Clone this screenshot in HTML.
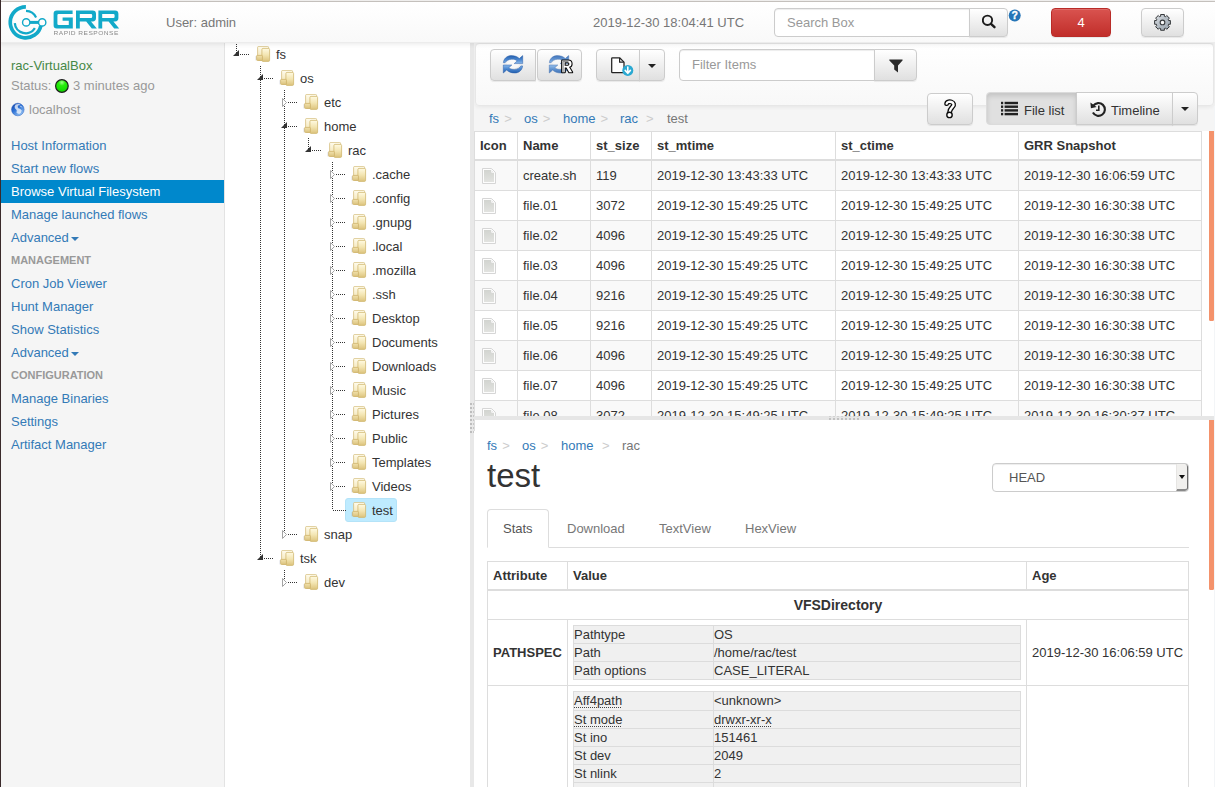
<!DOCTYPE html>
<html>
<head>
<meta charset="utf-8">
<title>GRR Rapid Response</title>
<style>
*{box-sizing:border-box;}
html,body{margin:0;padding:0;}
html{width:1215px;height:787px;overflow:hidden;}
body{width:1215px;height:787px;overflow:hidden;position:relative;background:#fff;
  font-family:"Liberation Sans",sans-serif;font-size:13px;color:#333;line-height:18px;}
.abs{position:absolute;}
a{color:#337ab7;text-decoration:none;}

/* window edges */
#edgeTop0{left:0;top:0;width:1215px;height:1px;background:#f2f1f0;}
#edgeTop1{left:0;top:1px;width:1215px;height:1px;background:#c9c5c1;}
#edgeLeft{left:0;top:0;width:1px;height:787px;background:#3a2a2b;z-index:50;}

/* header */
#header{left:0;top:2px;width:1215px;height:41px;background:linear-gradient(#ffffff,#f9f9f9);
  border-bottom:1px solid #ececec;box-shadow:0 1px 5px rgba(0,0,0,.09);z-index:10;}
.htext{color:#777;font-size:13px;line-height:18px;white-space:nowrap;}

.btn{position:absolute;border:1px solid #ccc;border-radius:4px;
  background:linear-gradient(#ffffff,#e0e0e0);box-shadow:inset 0 1px 0 rgba(255,255,255,.15),0 1px 1px rgba(0,0,0,.075);}
.inp{position:absolute;border:1px solid #ccc;background:#fff;border-radius:4px;
  box-shadow:inset 0 1px 1px rgba(0,0,0,.075);color:#999;font-size:13px;line-height:27px;padding-left:12px;}

/* sidebar */
#sidebar{left:1px;top:43px;width:224px;height:744px;background:#f5f5f5;border-right:1px solid #e3e3e3;}
.nav{position:absolute;left:0;width:223px;height:23px;line-height:23px;padding-left:10px;color:#337ab7;white-space:nowrap;}
.nav.active{background:#0088cc;color:#fff;}
.navh{position:absolute;left:0;width:223px;height:23px;line-height:23px;padding-left:10px;color:#999;font-weight:bold;font-size:11px;white-space:nowrap;}
.caret{display:inline-block;width:0;height:0;border-top:4px solid currentColor;border-left:4px solid transparent;border-right:4px solid transparent;vertical-align:middle;margin-left:2px;}

/* tree */
#tree{left:225px;top:43px;width:245px;height:744px;background:#fff;}
.treelines{position:absolute;left:0;top:0;z-index:2;}
.fold{position:absolute;z-index:3;}
.tl{position:absolute;height:24px;line-height:26px;font-size:13px;color:#333;white-space:nowrap;z-index:3;}
.tsel{position:absolute;width:52px;height:24px;background:#beebff;border:1px solid #b4e3f8;border-radius:3px;z-index:1;}

/* splitters */
#vsplit{left:470px;top:43px;width:4px;height:744px;background:#e8e8e8;z-index:7;}
#hsplit{left:474px;top:416px;width:741px;height:4px;background:#e6e6e6;z-index:6;}

/* right top */
#rtop{left:474px;top:43px;width:741px;height:373px;background:#fff;overflow:hidden;}
#bcbar{left:474px;top:43px;width:741px;height:88px;background:#f5f5f5;}
#toolbar{left:475px;top:43px;width:739px;height:63px;background:linear-gradient(#ffffff,#f8f8f8);border:1px solid #e7e7e7;border-radius:4px;
  box-shadow:0 1px 4px rgba(0,0,0,.065);}
.bc{position:absolute;white-space:nowrap;font-size:13px;line-height:18px;}
.bc .sep{color:#ccc;margin-left:1.4px;}
.bc .act{color:#777;}

table.ft{position:absolute;left:474px;top:131px;border-collapse:collapse;background:#fff;table-layout:fixed;width:727px;}
table.ft th,table.ft td{border:1px solid #ddd;padding:0 5px;text-align:left;font-size:13px;white-space:nowrap;overflow:hidden;}
table.ft th{height:28px;padding-top:2px;font-weight:bold;border-bottom:2px solid #ddd;line-height:18px;}
table.ft td{height:30px;line-height:18px;}
table.ft tr.odd td{background:#f9f9f9;}
table.ft tr#r1 td{height:31px;padding-top:1px;}
.fi{display:block;margin-left:2px;}

#scroll1{left:1209px;top:131px;width:5px;height:190px;background:#f4926b;z-index:7;border-radius:0 0 1.5px 1.5px;}
#redge{left:1214px;top:106px;width:1px;height:681px;background:#f3f5f7;z-index:9;}
#scroll2{left:1209px;top:420px;width:5px;height:170px;background:#f4926b;z-index:7;border-radius:0 0 1.5px 1.5px;}

/* bottom */
#rbot{left:475px;top:420px;width:740px;height:367px;background:#fff;overflow:hidden;}
h2.title{position:absolute;left:487px;top:456px;margin:0;font-size:33px;line-height:40px;font-weight:normal;color:#333;}
.tab{position:absolute;top:509px;height:39px;line-height:18px;padding:11px 15px 9px;color:#777;white-space:nowrap;}
.tab.active{border:1px solid #ddd;border-bottom-color:#fff;border-radius:4px 4px 0 0;color:#555;background:#fff;padding:10px 15px 9px;}
#tabline{left:488px;top:547px;width:701px;height:1px;background:#ddd;}

#stclip{left:487px;top:561px;width:720px;height:226px;overflow:hidden;}
table.st{position:absolute;left:0;top:0;border-collapse:collapse;width:701px;table-layout:fixed;background:#fff;}
table.st>tbody>tr>th,table.st>tbody>tr>td{border:1px solid #ddd;padding:5px;text-align:left;vertical-align:middle;font-size:13px;line-height:18px;white-space:nowrap;}
table.st>tbody>tr>th{border-bottom:2px solid #ddd;height:28px;padding:1px 5px 0;}
table.in{border-collapse:collapse;width:100%;table-layout:fixed;background:#f0f0f0;}
table.in td{border:1px solid #dcdcdc;padding:1px 1px 1px 0;line-height:15px;height:18px;font-size:13px;white-space:nowrap;}
abbr{text-decoration:underline dotted #444;text-decoration-thickness:1px;text-underline-offset:2px;}
</style>
</head>
<body>
<svg width="0" height="0" style="position:absolute">
<defs>
  <linearGradient id="fg1" x1="0" y1="0" x2="0" y2="1"><stop offset="0" stop-color="#fffcee"/><stop offset="0.6" stop-color="#f6ebc4"/><stop offset="1" stop-color="#e8d69e"/></linearGradient>
  <linearGradient id="fg2" x1="0" y1="0" x2="0" y2="1"><stop offset="0" stop-color="#fffae2"/><stop offset="0.5" stop-color="#f3e5b2"/><stop offset="1" stop-color="#dcc37c"/></linearGradient>
  <linearGradient id="fg3" x1="0" y1="0" x2="0" y2="1"><stop offset="0" stop-color="#f1e1ac"/><stop offset="1" stop-color="#dcc480"/></linearGradient>
  <g id="folder">
    <rect x="2.6" y="0.4" width="11" height="13.8" rx="1.1" fill="url(#fg1)" stroke="#d3bb78" stroke-width="0.75"/>
    <rect x="6.9" y="2.4" width="7.7" height="13" rx="1.1" fill="url(#fg2)" stroke="#cfb56c" stroke-width="0.75"/>
    <rect x="1.6" y="9.4" width="5.8" height="5" rx="0.7" fill="url(#fg3)" stroke="#cdb268" stroke-width="0.75"/>
    <rect x="0.4" y="10.2" width="0.8" height="4.2" fill="#9aa3b5" opacity="0.3"/>
  </g>
  <linearGradient id="rg1" x1="0" y1="0" x2="0" y2="1"><stop offset="0" stop-color="#235fae"/><stop offset="0.5" stop-color="#4a86cf"/><stop offset="1" stop-color="#8ab8ea"/></linearGradient>
  <linearGradient id="rg2" x1="0" y1="1" x2="0" y2="0"><stop offset="0" stop-color="#235fae"/><stop offset="0.5" stop-color="#4a86cf"/><stop offset="1" stop-color="#8ab8ea"/></linearGradient>
  <g id="refresh">
    <ellipse cx="0" cy="0" rx="6.2" ry="4.2" fill="#ffffff" opacity="0.6"/>
    <path id="rarrow" d="M-9.6 -1.6 C-9.4 -5.5 -6 -8.7 -2 -8.7 C1.5 -8.7 4.5 -7.7 6.3 -5.7 L9.7 -8.7 L9.7 -0.7 L1.2 -0.7 L4.2 -3.4 C3 -4.6 1 -5.3 -1.5 -5.1 C-4.5 -4.9 -7 -3.5 -7.9 -1.6 Z" fill="url(#rg1)" stroke="#2a5fa8" stroke-width="0.5"/>
    <path d="M9.6 1.6 C9.4 5.5 6 8.7 2 8.7 C-1.5 8.7 -4.5 7.7 -6.3 5.7 L-9.7 8.7 L-9.7 0.7 L-1.2 0.7 L-4.2 3.4 C-3 4.6 -1 5.3 1.5 5.1 C4.5 4.9 7 3.5 7.9 1.6 Z" fill="url(#rg2)" stroke="#2a5fa8" stroke-width="0.5"/>
  </g>
  <linearGradient id="fig" x1="0" y1="0" x2="0" y2="1"><stop offset="0" stop-color="#d2d4d0"/><stop offset="1" stop-color="#e2e3e0"/></linearGradient>
  <g id="fileicon">
    <path d="M0.5 0.5 L9.5 0.5 L13.5 4.5 L13.5 15.5 L0.5 15.5 Z" fill="#fdfdfd" stroke="#d6d6d6" stroke-width="1"/>
    <path d="M2 2 L9 2 L12 5 L12 14 L2 14 Z" fill="url(#fig)"/>
    <path d="M9.4 1.2 L9.6 4.4 L12.8 4.6" fill="none" stroke="#f4f4f4" stroke-width="1"/>
  </g>
</defs>
</svg>

<div class="abs" id="edgeTop0"></div><div class="abs" id="edgeTop1"></div>

<!-- HEADER -->
<div class="abs" id="header"></div>
<svg class="abs" id="logo" style="left:6px;top:3px;z-index:11;opacity:0.999;will-change:opacity" width="120" height="40" viewBox="0 0 120 40">
  <g fill="none" stroke="#12a9c9" stroke-linecap="butt">
    <path d="M19.9 3.9 A15.5 15.5 0 1 0 34.9 22.6" stroke-width="3.7"/>
    <path d="M20 7.9 A11.5 11.5 0 0 1 30.1 14.5" stroke-width="2.1"/>
    <path d="M8.8 20.1 A10.9 10.9 0 0 0 28.9 25.2" stroke-width="2.3"/>
    <path d="M23.5 19.4 L33 19.4" stroke-width="3"/>
    <circle cx="20.2" cy="19.4" r="3.65" stroke-width="1.4" fill="#fdfdfd"/>
    <circle cx="36.2" cy="19.4" r="3.65" stroke-width="1.4" fill="#fdfdfd"/>
  </g>
  <g fill="#12a9c9">
    <path d="M47.6 10.6 Q47.6 7.4 50.8 7.4 L66.6 7.4 L66.6 11 L52.6 11 Q51.4 11 51.4 12.2 L51.4 20.8 Q51.4 22 52.6 22 L62.8 22 L62.8 17.8 L56.6 17.8 L56.6 14.6 L66.8 14.6 L66.8 25.4 L50.8 25.4 Q47.6 25.4 47.6 22.2 Z"/>
    <path id="Rg" d="M70 7.4 L86.6 7.4 Q90 7.4 90 10.8 L90 15 Q90 18.4 86.6 18.4 L85 18.4 L90.8 25.4 L85.8 25.4 L80.2 18.4 L73.8 18.4 L73.8 25.4 L70 25.4 Z M73.8 11 L73.8 15 L85 15 Q86.2 15 86.2 13.8 L86.2 12.2 Q86.2 11 85 11 Z" fill-rule="evenodd"/>
    <use href="#Rg" x="22.4"/>
  </g>
  <text x="47.6" y="32" font-family="Liberation Sans, sans-serif" font-size="5.1" fill="#8a8a8a" textLength="65.2" lengthAdjust="spacingAndGlyphs" style="letter-spacing:0.35px">RAPID RESPONSE</text>
</svg>
<div class="abs htext" style="left:166px;top:14px;z-index:11">User: admin</div>
<div class="abs htext" style="left:593px;top:14px;z-index:11">2019-12-30 18:04:41 UTC</div>
<div class="inp" style="left:774px;top:8px;width:196px;height:29px;border-radius:4px 0 0 4px;z-index:11">Search Box</div>
<div class="btn" style="left:969px;top:8px;width:39px;height:29px;border-radius:0 4px 4px 0;z-index:11">
  <svg style="position:absolute;left:12px;top:5px" width="15" height="16" viewBox="0 0 15 16"><circle cx="5.5" cy="6.3" r="4.65" fill="none" stroke="#1c1c1c" stroke-width="1.9"/><path d="M9 9.8 L12.5 13.2" stroke="#1c1c1c" stroke-width="2.4" stroke-linecap="round"/></svg>
</div>
<svg class="abs" style="left:1008px;top:9px;z-index:11;opacity:0.999" width="14" height="14" viewBox="0 0 14 14"><circle cx="6.7" cy="6.5" r="6" fill="#2575b7"/><text x="6.7" y="10.2" text-anchor="middle" font-family="Liberation Sans, sans-serif" font-weight="bold" font-size="10.5" fill="#fff" stroke="#fff" stroke-width="0.35">?</text></svg>
<div class="btn" style="left:1051px;top:8px;width:60px;height:29px;background:linear-gradient(#d9534f,#c12e2a);border-color:#b92c28;color:#fff;text-align:center;line-height:27px;z-index:11">4</div>
<div class="btn" style="left:1141px;top:8px;width:43px;height:29px;z-index:11">
  <svg style="position:absolute;left:10px;top:3px" width="20" height="20" viewBox="-10.5 -10.4 20 20">
    <defs><linearGradient id="gearg" x1="0" y1="0" x2="1" y2="1"><stop offset="0" stop-color="#dfe3e7"/><stop offset="0.5" stop-color="#b4bcc4"/><stop offset="1" stop-color="#9aa5b0"/></linearGradient></defs>
    <path d="M-1.82 -6.14 L-1.89 -7.88 L1.89 -7.88 L1.82 -6.14 L3.05 -5.62 L4.23 -6.91 L6.91 -4.23 L5.62 -3.05 L6.14 -1.82 L7.88 -1.89 L7.88 1.89 L6.14 1.82 L5.62 3.05 L6.91 4.23 L4.23 6.91 L3.05 5.62 L1.82 6.14 L1.89 7.88 L-1.89 7.88 L-1.82 6.14 L-3.05 5.62 L-4.23 6.91 L-6.91 4.23 L-5.62 3.05 L-6.14 1.82 L-7.88 1.89 L-7.88 -1.89 L-6.14 -1.82 L-5.62 -3.05 L-6.91 -4.23 L-4.23 -6.91 L-3.05 -5.62 Z" fill="url(#gearg)" stroke="#34373a" stroke-width="1" stroke-linejoin="round"/>
    <circle r="2.3" fill="#fbfbfb" stroke="#34373a" stroke-width="1.1"/>
  </svg>
</div>

<!-- SIDEBAR -->
<div class="abs" id="sidebar">
  <div class="abs" style="left:10px;top:14px;color:#468847;white-space:nowrap">rac-VirtualBox</div>
  <div class="abs" style="left:10px;top:34px;color:#999;white-space:nowrap">Status:</div>
  <svg class="abs" style="left:53px;top:35px" width="16" height="16" viewBox="0 0 16 16">
    <defs><radialGradient id="gg" cx="0.5" cy="0.22" r="0.75"><stop offset="0" stop-color="#9dff8a"/><stop offset="0.35" stop-color="#27ef0c"/><stop offset="1" stop-color="#0fd400"/></radialGradient></defs>
    <circle cx="7.9" cy="8" r="6.3" fill="url(#gg)" stroke="#1d1d1d" stroke-width="1.2"/>
  </svg>
  <div class="abs" style="left:72px;top:34px;color:#999;white-space:nowrap">3 minutes ago</div>
  <svg class="abs" style="left:10px;top:59px" width="15" height="15" viewBox="0 0 15 15">
    <defs><linearGradient id="gl" x1="0.1" y1="0" x2="0.8" y2="1"><stop offset="0" stop-color="#0f3fa6"/><stop offset="0.45" stop-color="#2f73d6"/><stop offset="1" stop-color="#9fcbf6"/></linearGradient></defs>
    <circle cx="6.8" cy="7.5" r="6.3" fill="url(#gl)" stroke="#2a60c0" stroke-width="0.5"/>
    <path d="M4.6 2.6 Q7 1.3 9.6 2.4 Q8 3.4 7 3.6 Q6.2 5.2 7.4 6.2 Q9.6 6.6 10.8 8.4 Q10.4 10.8 8.2 12 Q6.4 12 5.4 10.6 Q6.4 8.8 5.2 7.6 Q3.4 6.8 3.6 4.6 Z" fill="#ffffff" opacity="0.72"/>
    <path d="M8.6 3.6 Q10.6 3.8 11.6 5.4 Q10.4 5.6 9.4 5 Z" fill="#ffffff" opacity="0.55"/>
  </svg>
  <div class="abs" style="left:28px;top:58px;color:#999;white-space:nowrap">localhost</div>

  <div class="nav" style="top:91px">Host Information</div>
  <div class="nav" style="top:114px">Start new flows</div>
  <div class="nav active" style="top:137px">Browse Virtual Filesystem</div>
  <div class="nav" style="top:160px">Manage launched flows</div>
  <div class="nav" style="top:183px">Advanced<span class="caret"></span></div>
  <div class="navh" style="top:206px">MANAGEMENT</div>
  <div class="nav" style="top:229px">Cron Job Viewer</div>
  <div class="nav" style="top:252px">Hunt Manager</div>
  <div class="nav" style="top:275px">Show Statistics</div>
  <div class="nav" style="top:298px">Advanced<span class="caret"></span></div>
  <div class="navh" style="top:321px">CONFIGURATION</div>
  <div class="nav" style="top:344px">Manage Binaries</div>
  <div class="nav" style="top:367px">Settings</div>
  <div class="nav" style="top:390px">Artifact Manager</div>
</div>
<div class="abs" id="edgeLeft"></div>

<!-- TREE -->
<div class="abs" id="tree"></div>
<svg class="treelines" width="1215" height="787" viewBox="0 0 1215 787"><g stroke="#333" stroke-width="1" stroke-dasharray="1 1" shape-rendering="crispEdges" fill="none"><line x1="236.5" y1="44" x2="236.5" y2="54"/><line x1="260.5" y1="66" x2="260.5" y2="558"/><line x1="284.5" y1="90" x2="284.5" y2="534"/><line x1="308.5" y1="138" x2="308.5" y2="150"/><line x1="332.5" y1="162" x2="332.5" y2="510"/><line x1="284.5" y1="570" x2="284.5" y2="582"/><line x1="240" y1="54.5" x2="249" y2="54.5"/><line x1="264" y1="78.5" x2="273" y2="78.5"/><line x1="288" y1="102.5" x2="297" y2="102.5"/><line x1="288" y1="126.5" x2="297" y2="126.5"/><line x1="312" y1="150.5" x2="321" y2="150.5"/><line x1="336" y1="174.5" x2="345" y2="174.5"/><line x1="336" y1="198.5" x2="345" y2="198.5"/><line x1="336" y1="222.5" x2="345" y2="222.5"/><line x1="336" y1="246.5" x2="345" y2="246.5"/><line x1="336" y1="270.5" x2="345" y2="270.5"/><line x1="336" y1="294.5" x2="345" y2="294.5"/><line x1="336" y1="318.5" x2="345" y2="318.5"/><line x1="336" y1="342.5" x2="345" y2="342.5"/><line x1="336" y1="366.5" x2="345" y2="366.5"/><line x1="336" y1="390.5" x2="345" y2="390.5"/><line x1="336" y1="414.5" x2="345" y2="414.5"/><line x1="336" y1="438.5" x2="345" y2="438.5"/><line x1="336" y1="462.5" x2="345" y2="462.5"/><line x1="336" y1="486.5" x2="345" y2="486.5"/><line x1="333" y1="510.5" x2="346" y2="510.5"/><line x1="288" y1="534.5" x2="297" y2="534.5"/><line x1="264" y1="558.5" x2="273" y2="558.5"/><line x1="288" y1="582.5" x2="297" y2="582.5"/></g><path d="M239 50 L239 56 L233 56 Z" fill="#333"/><path d="M263 74 L263 80 L257 80 Z" fill="#333"/><path d="M282.5 98.5 L286.5 102.5 L282.5 106.5 Z" fill="#fff" stroke="#a3a3a3" stroke-width="1"/><path d="M287 122 L287 128 L281 128 Z" fill="#333"/><path d="M311 146 L311 152 L305 152 Z" fill="#333"/><path d="M330.5 170.5 L334.5 174.5 L330.5 178.5 Z" fill="#fff" stroke="#a3a3a3" stroke-width="1"/><path d="M330.5 194.5 L334.5 198.5 L330.5 202.5 Z" fill="#fff" stroke="#a3a3a3" stroke-width="1"/><path d="M330.5 218.5 L334.5 222.5 L330.5 226.5 Z" fill="#fff" stroke="#a3a3a3" stroke-width="1"/><path d="M330.5 242.5 L334.5 246.5 L330.5 250.5 Z" fill="#fff" stroke="#a3a3a3" stroke-width="1"/><path d="M330.5 266.5 L334.5 270.5 L330.5 274.5 Z" fill="#fff" stroke="#a3a3a3" stroke-width="1"/><path d="M330.5 290.5 L334.5 294.5 L330.5 298.5 Z" fill="#fff" stroke="#a3a3a3" stroke-width="1"/><path d="M330.5 314.5 L334.5 318.5 L330.5 322.5 Z" fill="#fff" stroke="#a3a3a3" stroke-width="1"/><path d="M330.5 338.5 L334.5 342.5 L330.5 346.5 Z" fill="#fff" stroke="#a3a3a3" stroke-width="1"/><path d="M330.5 362.5 L334.5 366.5 L330.5 370.5 Z" fill="#fff" stroke="#a3a3a3" stroke-width="1"/><path d="M330.5 386.5 L334.5 390.5 L330.5 394.5 Z" fill="#fff" stroke="#a3a3a3" stroke-width="1"/><path d="M330.5 410.5 L334.5 414.5 L330.5 418.5 Z" fill="#fff" stroke="#a3a3a3" stroke-width="1"/><path d="M330.5 434.5 L334.5 438.5 L330.5 442.5 Z" fill="#fff" stroke="#a3a3a3" stroke-width="1"/><path d="M330.5 458.5 L334.5 462.5 L330.5 466.5 Z" fill="#fff" stroke="#a3a3a3" stroke-width="1"/><path d="M330.5 482.5 L334.5 486.5 L330.5 490.5 Z" fill="#fff" stroke="#a3a3a3" stroke-width="1"/><path d="M282.5 530.5 L286.5 534.5 L282.5 538.5 Z" fill="#fff" stroke="#a3a3a3" stroke-width="1"/><path d="M263 554 L263 560 L257 560 Z" fill="#333"/><path d="M282.5 578.5 L286.5 582.5 L282.5 586.5 Z" fill="#fff" stroke="#a3a3a3" stroke-width="1"/></svg>
<svg class="fold" style="left:255px;top:46px" width="16" height="16" viewBox="0 0 16 16"><use href="#folder"/></svg>
<div class="tl" style="left:276px;top:42px">fs</div>
<svg class="fold" style="left:279px;top:70px" width="16" height="16" viewBox="0 0 16 16"><use href="#folder"/></svg>
<div class="tl" style="left:300px;top:66px">os</div>
<svg class="fold" style="left:303px;top:94px" width="16" height="16" viewBox="0 0 16 16"><use href="#folder"/></svg>
<div class="tl" style="left:324px;top:90px">etc</div>
<svg class="fold" style="left:303px;top:118px" width="16" height="16" viewBox="0 0 16 16"><use href="#folder"/></svg>
<div class="tl" style="left:324px;top:114px">home</div>
<svg class="fold" style="left:327px;top:142px" width="16" height="16" viewBox="0 0 16 16"><use href="#folder"/></svg>
<div class="tl" style="left:348px;top:138px">rac</div>
<svg class="fold" style="left:351px;top:166px" width="16" height="16" viewBox="0 0 16 16"><use href="#folder"/></svg>
<div class="tl" style="left:372px;top:162px">.cache</div>
<svg class="fold" style="left:351px;top:190px" width="16" height="16" viewBox="0 0 16 16"><use href="#folder"/></svg>
<div class="tl" style="left:372px;top:186px">.config</div>
<svg class="fold" style="left:351px;top:214px" width="16" height="16" viewBox="0 0 16 16"><use href="#folder"/></svg>
<div class="tl" style="left:372px;top:210px">.gnupg</div>
<svg class="fold" style="left:351px;top:238px" width="16" height="16" viewBox="0 0 16 16"><use href="#folder"/></svg>
<div class="tl" style="left:372px;top:234px">.local</div>
<svg class="fold" style="left:351px;top:262px" width="16" height="16" viewBox="0 0 16 16"><use href="#folder"/></svg>
<div class="tl" style="left:372px;top:258px">.mozilla</div>
<svg class="fold" style="left:351px;top:286px" width="16" height="16" viewBox="0 0 16 16"><use href="#folder"/></svg>
<div class="tl" style="left:372px;top:282px">.ssh</div>
<svg class="fold" style="left:351px;top:310px" width="16" height="16" viewBox="0 0 16 16"><use href="#folder"/></svg>
<div class="tl" style="left:372px;top:306px">Desktop</div>
<svg class="fold" style="left:351px;top:334px" width="16" height="16" viewBox="0 0 16 16"><use href="#folder"/></svg>
<div class="tl" style="left:372px;top:330px">Documents</div>
<svg class="fold" style="left:351px;top:358px" width="16" height="16" viewBox="0 0 16 16"><use href="#folder"/></svg>
<div class="tl" style="left:372px;top:354px">Downloads</div>
<svg class="fold" style="left:351px;top:382px" width="16" height="16" viewBox="0 0 16 16"><use href="#folder"/></svg>
<div class="tl" style="left:372px;top:378px">Music</div>
<svg class="fold" style="left:351px;top:406px" width="16" height="16" viewBox="0 0 16 16"><use href="#folder"/></svg>
<div class="tl" style="left:372px;top:402px">Pictures</div>
<svg class="fold" style="left:351px;top:430px" width="16" height="16" viewBox="0 0 16 16"><use href="#folder"/></svg>
<div class="tl" style="left:372px;top:426px">Public</div>
<svg class="fold" style="left:351px;top:454px" width="16" height="16" viewBox="0 0 16 16"><use href="#folder"/></svg>
<div class="tl" style="left:372px;top:450px">Templates</div>
<svg class="fold" style="left:351px;top:478px" width="16" height="16" viewBox="0 0 16 16"><use href="#folder"/></svg>
<div class="tl" style="left:372px;top:474px">Videos</div>
<div class="tsel" style="left:345px;top:498px;"></div>
<svg class="fold" style="left:351px;top:502px" width="16" height="16" viewBox="0 0 16 16"><use href="#folder"/></svg>
<div class="tl" style="left:372px;top:498px">test</div>
<svg class="fold" style="left:303px;top:526px" width="16" height="16" viewBox="0 0 16 16"><use href="#folder"/></svg>
<div class="tl" style="left:324px;top:522px">snap</div>
<svg class="fold" style="left:279px;top:550px" width="16" height="16" viewBox="0 0 16 16"><use href="#folder"/></svg>
<div class="tl" style="left:300px;top:546px">tsk</div>
<svg class="fold" style="left:303px;top:574px" width="16" height="16" viewBox="0 0 16 16"><use href="#folder"/></svg>
<div class="tl" style="left:324px;top:570px">dev</div>

<!-- SPLITTERS -->
<div class="abs" id="vsplit"></div>
<div class="abs" style="left:470px;top:403px;width:2px;height:30px;z-index:8;background:repeating-linear-gradient(to bottom,#bdbdbd 0,#bdbdbd 2px,transparent 2px,transparent 4px)"></div>
<div class="abs" style="left:473px;top:403px;width:1px;height:30px;z-index:8;background:repeating-linear-gradient(to bottom,#c6c6c6 0,#c6c6c6 2px,transparent 2px,transparent 4px)"></div>

<!-- RIGHT TOP -->
<div class="abs" id="rtop"></div><div class="abs" id="bcbar"></div>
<div class="abs" id="toolbar"></div>
<div class="btn" style="left:490px;top:49px;width:46px;height:32px;border-radius:4px 0 0 4px">
  <svg style="position:absolute;left:11px;top:4px" width="22" height="20" viewBox="-11 -10.3 22 20"><use href="#refresh"/></svg>
</div>
<div class="btn" style="left:537px;top:49px;width:45px;height:32px;border-radius:4px">
  <svg style="position:absolute;left:10px;top:4px;opacity:0.999" width="28" height="22" viewBox="-11 -10.3 28 22"><g opacity="0.85"><use href="#refresh"/></g>
   <path transform="translate(3.2 -3.7) scale(0.975)" d="M0 0 L6 0 Q9.6 0 9.6 3.4 Q9.6 6 7 6.6 L10.2 12 L7.2 12 L4.4 7 L2.6 7 L2.6 12 L0 12 Z M2.5 1.7 L2.5 5.3 L5.8 5.3 Q7.4 5.3 7.4 3.5 Q7.4 1.7 5.8 1.7 Z" fill-rule="evenodd" fill="#fff" stroke="#0a0a0a" stroke-width="2.2" paint-order="stroke" stroke-linejoin="round"/>
   <path d="M4.1 -3.1 L4.1 7.7 M4.1 -3 L9.4 -3" stroke="#7d7d7d" stroke-width="1.2" fill="none" opacity="0.85"/>
  </svg>
</div>
<div class="btn" style="left:596px;top:49px;width:44px;height:32px;border-radius:4px 0 0 4px">
  <svg style="position:absolute;left:11px;top:3px" width="26" height="24" viewBox="0 -0.5 26 24">
    <path d="M4.3 4.3 L11.6 4.3 L16 8.6 L16 18.4 Q16 19 15.4 19 L4.3 19 Q3.7 19 3.7 18.4 L3.7 4.9 Q3.7 4.3 4.3 4.3 Z" fill="#fff" stroke="#222" stroke-width="1.25" stroke-linejoin="round"/>
    <path d="M11.6 4.5 L11.6 8.6 L15.8 8.6" fill="none" stroke="#222" stroke-width="1.15"/>
    <circle cx="19.8" cy="16.9" r="5.5" fill="#2aa9d2"/>
    <path d="M19.8 13.6 L19.8 19 M17.2 16.9 L19.8 19.8 L22.4 16.9" fill="none" stroke="#fff" stroke-width="1.6" stroke-linecap="round" stroke-linejoin="round"/>
  </svg>
</div>
<div class="btn" style="left:639px;top:49px;width:26px;height:32px;border-radius:0 4px 4px 0"><span class="caret" style="position:absolute;left:8px;top:14px;margin:0;color:#222"></span></div>
<div class="inp" style="left:679px;top:49px;width:196px;height:32px;line-height:30px;border-radius:4px 0 0 4px">Filter Items</div>
<div class="btn" style="left:874px;top:49px;width:43px;height:32px;border-radius:0 4px 4px 0">
  <svg style="position:absolute;left:14px;top:9px" width="14" height="14" viewBox="0 0 14 14"><path d="M0.4 0.6 L13.4 0.6 Q13.9 0.9 13.5 1.5 L9 6.6 L9 13.4 L5.2 10.6 L5.2 6.6 L0.4 1.5 Q0 0.9 0.4 0.6 Z" fill="#2b2b2b"/></svg>
</div>

<div class="btn" style="left:927px;top:93px;width:46px;height:32px">
  <svg style="position:absolute;left:0;top:0" width="44" height="30" viewBox="928 94 44 30">
    <g fill="none" stroke-linecap="round" stroke-linejoin="round">
      <path d="M946.7 103.6 C947 101.7 950 101.6 951.4 102 C953.8 102.7 954.1 105 952.8 106.5 C951.4 108.1 949.8 109.3 949.7 112" stroke="#0a0a0a" stroke-width="4.9"/>
      <path d="M946.7 103.6 C947 101.7 950 101.6 951.4 102 C953.8 102.7 954.1 105 952.8 106.5 C951.4 108.1 949.8 109.3 949.7 112" stroke="#fff" stroke-width="2.4"/>
      <circle cx="949.5" cy="114.9" r="2.7" fill="#fff" stroke="#0a0a0a" stroke-width="1.35"/>
    </g>
  </svg>
</div>
<div class="btn" style="left:986px;top:92px;width:91px;height:33px;border-radius:4px 0 0 4px;background:#e0e0e0;border-color:#dbdbdb;box-shadow:inset 0 3px 5px rgba(0,0,0,.125)">
  <svg style="position:absolute;left:14px;top:8px" width="18" height="15" viewBox="0 -0.3 18 15"><g fill="#222"><rect x="0" y="0.5" width="2.2" height="2.4"/><rect x="3.6" y="0.5" width="13.4" height="2.4"/><rect x="0" y="4.2" width="2.2" height="2.4"/><rect x="3.6" y="4.2" width="13.4" height="2.4"/><rect x="0" y="7.9" width="2.2" height="2.4"/><rect x="3.6" y="7.9" width="13.4" height="2.4"/><rect x="0" y="11.6" width="2.2" height="2.4"/><rect x="3.6" y="11.6" width="13.4" height="2.4"/></g></svg>
  <span style="position:absolute;left:37px;top:9px;color:#333;white-space:nowrap">File list</span></div>
<div class="btn" style="left:1076px;top:92px;width:97px;height:33px;border-radius:0">
  <svg style="position:absolute;left:13px;top:8px" width="17" height="17" viewBox="0 0 17 17"><path d="M3.3 4.7 A6.4 6.4 0 1 1 2.9 11.6" fill="none" stroke="#222" stroke-width="2.1"/><path d="M0.4 1.4 L0.9 7.2 L6.6 6 Z" fill="#222"/><path d="M8.8 4.6 L8.8 9.2 L6 9.2" fill="none" stroke="#222" stroke-width="1.6"/></svg>
  <span style="position:absolute;left:34px;top:9px;color:#333;white-space:nowrap">Timeline</span></div>
<div class="btn" style="left:1172px;top:92px;width:26px;height:33px;border-radius:0 4px 4px 0"><span class="caret" style="position:absolute;left:8px;top:14px;margin:0;color:#222"></span></div>

<div class="bc" style="left:489px;top:110px"><a>fs</a> <span class="sep">&gt;</span></div>
<div class="bc" style="left:524px;top:110px"><a>os</a> <span class="sep">&gt;</span></div>
<div class="bc" style="left:563px;top:110px"><a>home</a> <span class="sep">&gt;</span></div>
<div class="bc" style="left:620px;top:110px"><a>rac</a></div>
<div class="bc" style="left:646px;top:110px"><span class="sep" style="margin:0">&gt;</span></div>
<div class="bc" style="left:667px;top:110px"><span class="act">test</span></div>

<table class="ft">
<colgroup><col style="width:43px"><col style="width:73px"><col style="width:61px"><col style="width:184px"><col style="width:183px"><col style="width:183px"></colgroup>
<tr><th>Icon</th><th>Name</th><th>st_size</th><th>st_mtime</th><th>st_ctime</th><th>GRR Snapshot</th></tr>
<tr class="odd" id="r1"><td><svg class="fi" width="14" height="16" viewBox="0 0 14 16"><use href="#fileicon"/></svg></td><td>create.sh</td><td>119</td><td>2019-12-30 13:43:33 UTC</td><td>2019-12-30 13:43:33 UTC</td><td>2019-12-30 16:06:59 UTC</td></tr>
<tr class="even"><td><svg class="fi" width="14" height="16" viewBox="0 0 14 16"><use href="#fileicon"/></svg></td><td>file.01</td><td>3072</td><td>2019-12-30 15:49:25 UTC</td><td>2019-12-30 15:49:25 UTC</td><td>2019-12-30 16:30:38 UTC</td></tr>
<tr class="odd"><td><svg class="fi" width="14" height="16" viewBox="0 0 14 16"><use href="#fileicon"/></svg></td><td>file.02</td><td>4096</td><td>2019-12-30 15:49:25 UTC</td><td>2019-12-30 15:49:25 UTC</td><td>2019-12-30 16:30:38 UTC</td></tr>
<tr class="even"><td><svg class="fi" width="14" height="16" viewBox="0 0 14 16"><use href="#fileicon"/></svg></td><td>file.03</td><td>4096</td><td>2019-12-30 15:49:25 UTC</td><td>2019-12-30 15:49:25 UTC</td><td>2019-12-30 16:30:38 UTC</td></tr>
<tr class="odd"><td><svg class="fi" width="14" height="16" viewBox="0 0 14 16"><use href="#fileicon"/></svg></td><td>file.04</td><td>9216</td><td>2019-12-30 15:49:25 UTC</td><td>2019-12-30 15:49:25 UTC</td><td>2019-12-30 16:30:38 UTC</td></tr>
<tr class="even"><td><svg class="fi" width="14" height="16" viewBox="0 0 14 16"><use href="#fileicon"/></svg></td><td>file.05</td><td>9216</td><td>2019-12-30 15:49:25 UTC</td><td>2019-12-30 15:49:25 UTC</td><td>2019-12-30 16:30:38 UTC</td></tr>
<tr class="odd"><td><svg class="fi" width="14" height="16" viewBox="0 0 14 16"><use href="#fileicon"/></svg></td><td>file.06</td><td>4096</td><td>2019-12-30 15:49:25 UTC</td><td>2019-12-30 15:49:25 UTC</td><td>2019-12-30 16:30:38 UTC</td></tr>
<tr class="even"><td><svg class="fi" width="14" height="16" viewBox="0 0 14 16"><use href="#fileicon"/></svg></td><td>file.07</td><td>4096</td><td>2019-12-30 15:49:25 UTC</td><td>2019-12-30 15:49:25 UTC</td><td>2019-12-30 16:30:38 UTC</td></tr>
<tr class="odd"><td><svg class="fi" width="14" height="16" viewBox="0 0 14 16"><use href="#fileicon"/></svg></td><td>file.08</td><td>3072</td><td>2019-12-30 15:49:25 UTC</td><td>2019-12-30 15:49:25 UTC</td><td>2019-12-30 16:30:37 UTC</td></tr>
</table>
<div class="abs" id="scroll1"></div><div class="abs" id="redge"></div>

<!-- RIGHT BOTTOM -->
<div class="abs" id="rbot"></div>
<div class="abs" id="hsplit"></div>
<div class="abs" style="left:829px;top:416px;width:30px;height:1px;z-index:8;background:repeating-linear-gradient(to right,#d2d2d2 0,#d2d2d2 2px,transparent 2px,transparent 4px)"></div>
<div class="abs" style="left:829px;top:418px;width:30px;height:2px;z-index:8;background:repeating-linear-gradient(to right,#c2c2c2 0,#c2c2c2 2px,transparent 2px,transparent 4px)"></div>
<div class="abs" id="scroll2"></div>

<div class="bc" style="left:487px;top:437px"><a>fs</a> <span class="sep">&gt;</span></div>
<div class="bc" style="left:522px;top:437px"><a>os</a> <span class="sep">&gt;</span></div>
<div class="bc" style="left:561px;top:437px"><a>home</a></div>
<div class="bc" style="left:602px;top:437px"><span class="sep" style="margin:0">&gt;</span></div>
<div class="bc" style="left:622px;top:437px"><span class="act">rac</span></div>
<h2 class="title">test</h2>

<div class="inp" style="left:992px;top:463px;width:197px;height:29px;color:#555;padding-left:16px;overflow:hidden">HEAD
  <div style="position:absolute;left:183px;top:0;width:12px;height:27px;background:#f1f0ee;border-right:1px solid #6e6e6e;border-bottom:2px solid #8a8a8a;border-left:1px solid #e6e5e3;border-radius:0 3px 3px 0"></div>
  <div style="position:absolute;left:186px;top:11px;width:0;height:0;border-top:4px solid #111;border-left:3px solid transparent;border-right:3px solid transparent"></div>
</div>

<div class="abs" id="tabline"></div>
<div class="tab active" style="left:487px;width:62px;z-index:2">Stats</div>
<div class="tab" style="left:552px">Download</div>
<div class="tab" style="left:644px">TextView</div>
<div class="tab" style="left:730px">HexView</div>

<div class="abs" id="stclip"><table class="st">
<colgroup><col style="width:80px"><col style="width:459px"><col style="width:162px"></colgroup>
<tbody>
<tr><th>Attribute</th><th>Value</th><th>Age</th></tr>
<tr><td colspan="3" style="text-align:center;font-weight:bold;font-size:14px;height:30px;padding:0 5px">VFSDirectory</td></tr>
<tr><td style="font-weight:bold">PATHSPEC</td>
  <td><table class="in"><colgroup><col style="width:140px"><col></colgroup>
    <tr><td>Pathtype</td><td>OS</td></tr>
    <tr><td>Path</td><td>/home/rac/test</td></tr>
    <tr><td>Path options</td><td>CASE_LITERAL</td></tr></table></td>
  <td>2019-12-30 16:06:59 UTC</td></tr>
<tr><td></td>
  <td style="vertical-align:top"><table class="in"><colgroup><col style="width:140px"><col></colgroup>
    <tr><td style="height:19px;padding-bottom:2px"><abbr>Aff4path</abbr></td><td style="height:19px;padding-bottom:2px">&lt;unknown&gt;</td></tr>
    <tr><td><abbr>St mode</abbr></td><td><abbr>drwxr-xr-x</abbr></td></tr>
    <tr><td>St ino</td><td>151461</td></tr>
    <tr><td>St dev</td><td>2049</td></tr>
    <tr><td>St nlink</td><td>2</td></tr>
    <tr><td>St uid</td><td>1000</td></tr>
    <tr><td>St gid</td><td>1000</td></tr></table></td>
  <td></td></tr>
</tbody>
</table></div>
</body>
</html>
